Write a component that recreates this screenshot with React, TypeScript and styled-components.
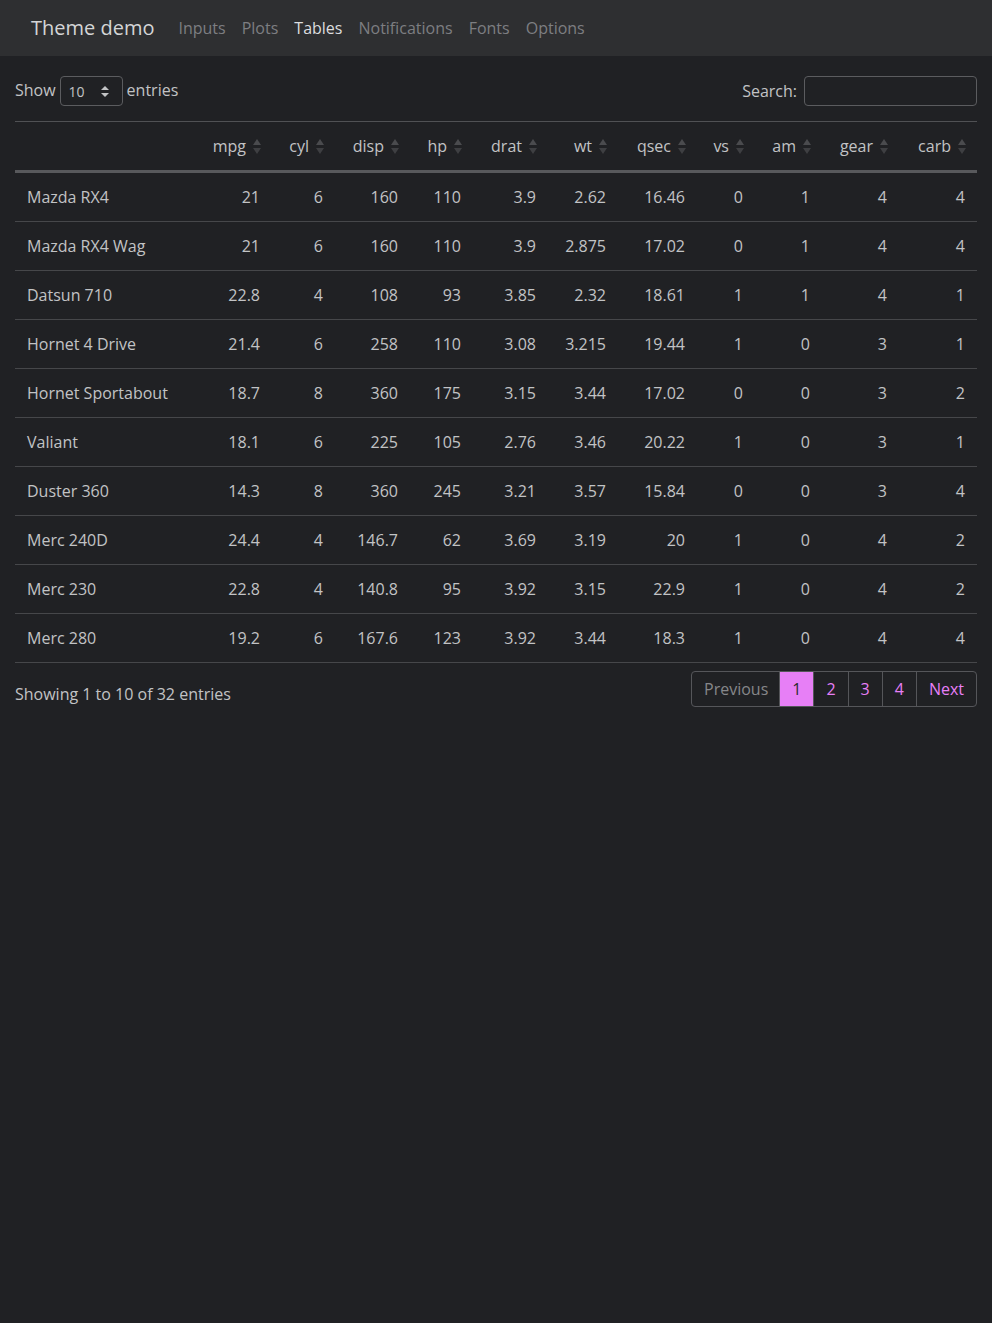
import React from 'react';
import styled, { createGlobalStyle } from 'styled-components';

const GlobalStyle = createGlobalStyle`
  html, body {
    margin: 0;
    padding: 0;
    background: #202124;
    min-height: 100%;
  }
  body {
    font-family: 'Open Sans', 'Liberation Sans', sans-serif;
    color: #c2c3c5;
    font-size: 16px;
  }
`;

type Car = [string, number | string, number, number | string, number, number | string, number | string, number | string, number, number, number, number];

const rows: Car[] = [
  ['Mazda RX4', 21, 6, 160, 110, 3.9, 2.62, 16.46, 0, 1, 4, 4],
  ['Mazda RX4 Wag', 21, 6, 160, 110, 3.9, 2.875, 17.02, 0, 1, 4, 4],
  ['Datsun 710', 22.8, 4, 108, 93, 3.85, 2.32, 18.61, 1, 1, 4, 1],
  ['Hornet 4 Drive', 21.4, 6, 258, 110, 3.08, 3.215, 19.44, 1, 0, 3, 1],
  ['Hornet Sportabout', 18.7, 8, 360, 175, 3.15, 3.44, 17.02, 0, 0, 3, 2],
  ['Valiant', 18.1, 6, 225, 105, 2.76, 3.46, 20.22, 1, 0, 3, 1],
  ['Duster 360', 14.3, 8, 360, 245, 3.21, 3.57, 15.84, 0, 0, 3, 4],
  ['Merc 240D', 24.4, 4, 146.7, 62, 3.69, 3.19, 20, 1, 0, 4, 2],
  ['Merc 230', 22.8, 4, 140.8, 95, 3.92, 3.15, 22.9, 1, 0, 4, 2],
  ['Merc 280', 19.2, 6, 167.6, 123, 3.92, 3.44, 18.3, 1, 0, 4, 4],
];

const columns = ['mpg', 'cyl', 'disp', 'hp', 'drat', 'wt', 'qsec', 'vs', 'am', 'gear', 'carb'];
const widths = [181, 76, 63, 75, 63, 75, 70, 79, 58, 67, 77, 78];

const navLinks = ['Inputs', 'Plots', 'Tables', 'Notifications', 'Fonts', 'Options'];

const SortIcon = () => (
  <svg width="8" height="15" viewBox="0 0 8 15">
    <path d="M4 0 L8 6 L0 6 Z" fill="#4a4b4e" />
    <path d="M4 15 L8 9 L0 9 Z" fill="#3e3f42" />
  </svg>
);

export default function App() {
  return (
    <>
      <GlobalStyle />
      <Navbar>
        <Brand>Theme demo</Brand>
        <NavList>
          {navLinks.map((l) => (
            <NavLink key={l} active={l === 'Tables'}>
              {l}
            </NavLink>
          ))}
        </NavList>
      </Navbar>

      <Container>
        <Controls>
          <LengthLabel>
            Show
            <Select>
              <span>10</span>
              <svg width="8" height="11" viewBox="0 0 8 11">
                <path d="M4 0 L8 4 L0 4 Z" fill="#c2c3c5" />
                <path d="M4 11 L8 7 L0 7 Z" fill="#c2c3c5" />
              </svg>
            </Select>
            entries
          </LengthLabel>
          <SearchLabel>
            Search:
            <SearchInput />
          </SearchLabel>
        </Controls>

        <Table>
          <colgroup>
            {widths.map((w, i) => (
              <col key={i} style={{ width: w }} />
            ))}
          </colgroup>
          <thead>
            <tr>
              <HeadCell />
              {columns.map((c) => (
                <HeadCell key={c} numeric>
                  <HeadInner>
                    {c}
                    <SortIcon />
                  </HeadInner>
                </HeadCell>
              ))}
            </tr>
          </thead>
          <tbody>
            {rows.map((r) => (
              <tr key={r[0]}>
                {r.map((v, i) => (
                  <Cell key={i} numeric={i > 0}>
                    {v}
                  </Cell>
                ))}
              </tr>
            ))}
          </tbody>
        </Table>

        <Footer>
          <Info>Showing 1 to 10 of 32 entries</Info>
          <Pagination>
            <PageItem disabled>Previous</PageItem>
            <PageItem active>1</PageItem>
            <PageItem>2</PageItem>
            <PageItem>3</PageItem>
            <PageItem>4</PageItem>
            <PageItem>Next</PageItem>
          </Pagination>
        </Footer>
      </Container>
    </>
  );
}

const Navbar = styled.nav`
  display: flex;
  align-items: center;
  height: 56px;
  background: #2e2f31;
  padding: 0 31px;
`;

const Brand = styled.div`
  font-size: 20px;
  color: #d4d5d6;
  margin-right: 16px;
  line-height: 30px;
`;

const NavList = styled.div`
  display: flex;
`;

const NavLink = styled.a<{ active?: boolean }>`
  padding: 8px;
  font-size: 16px;
  color: ${(p) => (p.active ? '#dcdddf' : '#7d7e81')};
  line-height: 24px;
`;

const Container = styled.div`
  padding: 0 15px;
`;

const Controls = styled.div`
  display: flex;
  justify-content: space-between;
  align-items: center;
  padding-top: 20px;
  margin-bottom: 15px;
`;

const LengthLabel = styled.label`
  display: flex;
  align-items: center;
  gap: 4px;
  margin-top: -2px;
`;

const Select = styled.div`
  display: flex;
  align-items: center;
  justify-content: space-between;
  box-sizing: border-box;
  width: 63px;
  height: 30px;
  margin-top: 2px;
  padding: 0 13px 0 8px;
  border: 1px solid #5b5c5f;
  border-radius: 4px;
  font-size: 14px;
`;

const SearchLabel = styled.label`
  display: flex;
  align-items: center;
  gap: 7px;
`;

const SearchInput = styled.div`
  box-sizing: border-box;
  width: 173px;
  height: 30px;
  border: 1px solid #5b5c5f;
  border-radius: 4px;
`;

const Table = styled.table`
  width: 100%;
  border-collapse: collapse;
  table-layout: fixed;
  border-top: 1px solid #505154;
`;

const HeadCell = styled.th<{ numeric?: boolean }>`
  font-weight: 400;
  padding: 12px 11px 12px 12px;
  line-height: 24px;
  text-align: ${(p) => (p.numeric ? 'right' : 'left')};
  border-bottom: 3px solid #58595c;
  color: #c2c3c5;
`;

const HeadInner = styled.span`
  display: inline-flex;
  align-items: center;
  gap: 7px;
  svg {
    margin-top: 1px;
  }
`;

const Cell = styled.td<{ numeric?: boolean }>`
  padding: 12px;
  line-height: 24px;
  text-align: ${(p) => (p.numeric ? 'right' : 'left')};
  border-bottom: 1px solid #46474a;
  white-space: nowrap;
`;

const Footer = styled.div`
  display: flex;
  justify-content: space-between;
  align-items: flex-start;
  margin-top: 8px;
`;

const Info = styled.div`
  padding-top: 11px;
  line-height: 24px;
`;

const Pagination = styled.div`
  display: flex;
  border: 1px solid #55565a;
  border-radius: 4px;
  overflow: hidden;
`;

const PageItem = styled.div<{ active?: boolean; disabled?: boolean }>`
  padding: 5px 12px;
  line-height: 24px;
  text-align: center;
  background: ${(p) => (p.active ? '#e77ff6' : 'transparent')};
  color: ${(p) => (p.active ? '#2a2b2e' : p.disabled ? '#86878a' : '#e77ff6')};
  & + & {
    border-left: 1px solid #55565a;
  }
  &:first-child {
    padding: 5px 11px 5px 12px;
  }
`;
